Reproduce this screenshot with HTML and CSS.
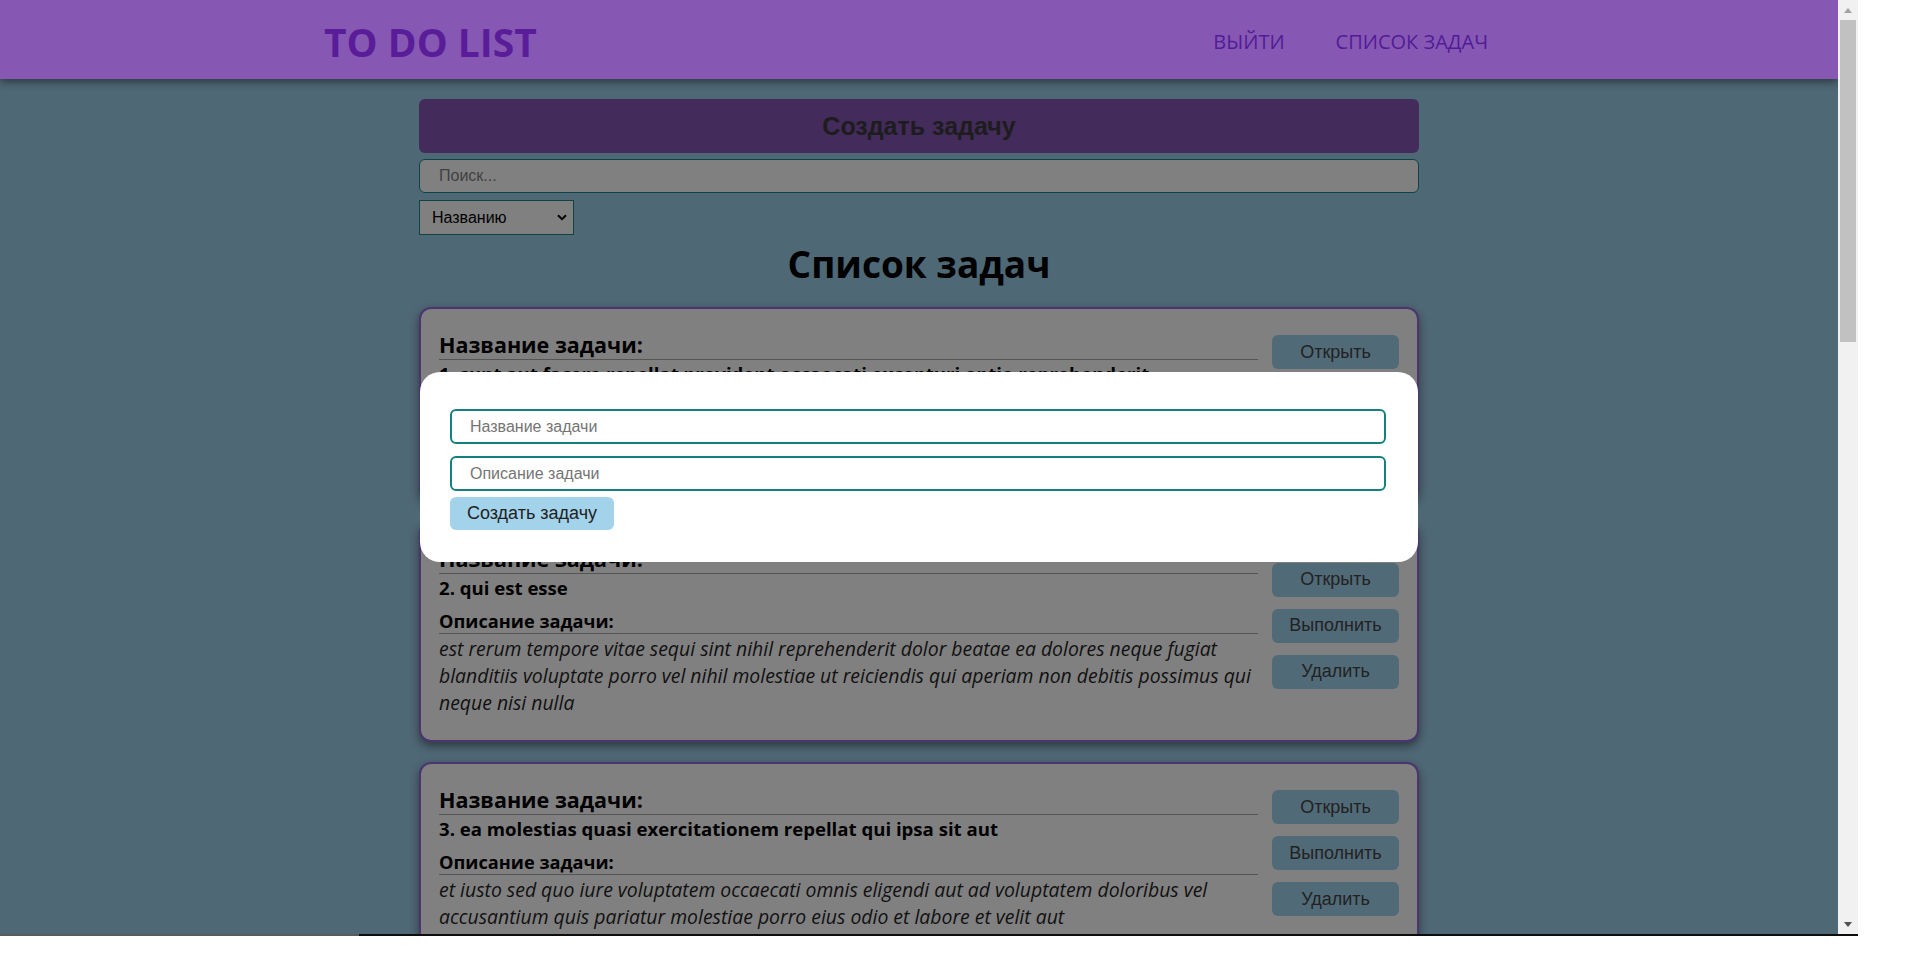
FILE: index.html
```html
<!DOCTYPE html>
<html lang="ru">
<head>
<meta charset="utf-8">
<title>TO DO LIST</title>
<link rel="stylesheet" href="styles.css">
</head>
<body>
<div class="screen">
  <div class="page">
    <header class="topbar">
      <div class="topbar-inner">
        <div class="logo">TO DO LIST</div>
        <nav class="nav">
          <a href="#" class="nav-link">ВЫЙТИ</a>
          <a href="#" class="nav-link">СПИСОК ЗАДАЧ</a>
        </nav>
      </div>
    </header>

    <main class="main">
      <button class="create-btn" type="button">Создать задачу</button>
      <input class="search" type="text" placeholder="Поиск...">
      <div class="sort">
        <select class="sort-select">
          <option>Названию</option>
          <option>Описанию</option>
        </select>
        <svg class="sort-chevron" width="10" height="7" viewBox="0 0 10 7"><path d="M1 1.2 L5 5.2 L9 1.2" fill="none" stroke="#000" stroke-width="2"/></svg>
      </div>
      <h2 class="list-title">Список задач</h2>

      <div class="cards">
        <article class="card">
          <div class="card-body">
            <h3 class="card-label">Название задачи:</h3>
            <p class="card-title">1. sunt aut facere repellat provident occaecati excepturi optio reprehenderit</p>
            <h4 class="card-label card-label-desc">Описание задачи:</h4>
            <p class="card-text">quia et suscipit suscipit recusandae consequuntur expedita et cum reprehenderit molestiae ut ut quas totam nostrum rerum est autem sunt rem eveniet architecto</p>
          </div>
          <div class="card-actions">
            <button class="card-btn" type="button">Открыть</button>
            <button class="card-btn" type="button">Выполнить</button>
            <button class="card-btn" type="button">Удалить</button>
          </div>
        </article>

        <article class="card">
          <div class="card-body">
            <h3 class="card-label">Название задачи:</h3>
            <p class="card-title">2. qui est esse</p>
            <h4 class="card-label card-label-desc">Описание задачи:</h4>
            <p class="card-text">est rerum tempore vitae sequi sint nihil reprehenderit dolor beatae ea dolores neque fugiat blanditiis voluptate porro vel nihil molestiae ut reiciendis qui aperiam non debitis possimus qui neque nisi nulla</p>
          </div>
          <div class="card-actions">
            <button class="card-btn" type="button">Открыть</button>
            <button class="card-btn" type="button">Выполнить</button>
            <button class="card-btn" type="button">Удалить</button>
          </div>
        </article>

        <article class="card">
          <div class="card-body">
            <h3 class="card-label">Название задачи:</h3>
            <p class="card-title">3. ea molestias quasi exercitationem repellat qui ipsa sit aut</p>
            <h4 class="card-label card-label-desc">Описание задачи:</h4>
            <p class="card-text">et iusto sed quo iure voluptatem occaecati omnis eligendi aut ad voluptatem doloribus vel accusantium quis pariatur molestiae porro eius odio et labore et velit aut</p>
          </div>
          <div class="card-actions">
            <button class="card-btn" type="button">Открыть</button>
            <button class="card-btn" type="button">Выполнить</button>
            <button class="card-btn" type="button">Удалить</button>
          </div>
        </article>
      </div>
    </main>

    <div class="overlay">
      <form class="modal">
        <input class="modal-input" type="text" placeholder="Название задачи">
        <input class="modal-input modal-input-second" type="text" placeholder="Описание задачи">
        <button class="modal-btn" type="button">Создать задачу</button>
      </form>
    </div>
  </div>

  <div class="scrollbar">
    <div class="sb-btn sb-up"><svg width="8" height="5" viewBox="0 0 8 5"><path d="M0 5 L4 0 L8 5 Z" fill="#a3a3a3"/></svg></div>
    <div class="sb-thumb"></div>
    <div class="sb-track"></div>
    <div class="sb-btn sb-down"><svg width="8" height="5" viewBox="0 0 8 5"><path d="M0 0 L8 0 L4 5 Z" fill="#505050"/></svg></div>
  </div>
</div>
<div class="strip"></div>
</body>
</html>
```
FILE: styles.css
```css
* {
  box-sizing: border-box;
}

html, body {
  margin: 0;
  padding: 0;
  background: #ffffff;
}

.screen {
  display: flex;
  width: 1858px;
  height: 934px;
  overflow: hidden;
}

.page {
  flex: 0 0 1838px;
  position: relative;
  overflow: hidden;
  background: #4f6875;
}

/* header */
.topbar {
  position: relative;
  z-index: 2;
  height: 79px;
  background: #8658b3;
  box-shadow: 0 3px 8px rgba(0, 0, 0, 0.45);
}

.topbar-inner {
  width: 1200px;
  height: 100%;
  margin: 0 auto;
  padding-left: 5px;
  display: flex;
  align-items: center;
  justify-content: space-between;
}

.logo {
  font-family: "Open Sans", sans-serif;
  font-weight: 700;
  font-size: 39px;
  line-height: 1;
  color: #5a1d99;
  padding-top: 4px;
}

.nav {
  display: flex;
  padding-top: 3px;
  padding-right: 31px;
}

.nav-link {
  font-family: "Open Sans", sans-serif;
  font-size: 20px;
  color: #521c96;
  text-decoration: none;
}

.nav-link + .nav-link {
  margin-left: 51px;
}

/* main column */
.main {
  width: 1000px;
  margin: 20px auto 0;
  display: flex;
  flex-direction: column;
}

.create-btn {
  height: 54px;
  border: none;
  border-radius: 6px;
  background: #432b5c;
  font-family: "Liberation Sans", Arial, sans-serif;
  font-weight: 700;
  font-size: 25px;
  color: #1d1d1d;
}

.search {
  margin-top: 6px;
  height: 34px;
  border: 1px solid #0e4444;
  border-radius: 6px;
  background: #808080;
  padding: 0 19px;
  font-family: "Liberation Sans", Arial, sans-serif;
  font-size: 16px;
  color: #000;
  outline: none;
}

.search::placeholder {
  color: #404040;
}

.sort {
  position: relative;
  margin-top: 7px;
  width: 155px;
  height: 35px;
}

.sort-select {
  width: 100%;
  height: 100%;
  appearance: none;
  -webkit-appearance: none;
  background: #808080;
  border: 1px solid #0e4444;
  border-radius: 0;
  padding: 0 0 0 12px;
  font-family: "Liberation Sans", Arial, sans-serif;
  font-size: 16px;
  color: #000;
}

.sort-chevron {
  position: absolute;
  right: 7px;
  top: 14px;
  pointer-events: none;
}

.list-title {
  margin: 0 0 14px;
  line-height: 58px;
  text-align: center;
  font-family: "Open Sans", sans-serif;
  font-weight: 700;
  font-size: 37px;
  color: #000;
}

/* cards */
.cards {
  display: flex;
  flex-direction: column;
  gap: 20px;
}

.card {
  display: flex;
  align-items: center;
  gap: 14px;
  padding: 14px 18px 26px;
  border: 2px solid #4b3470;
  border-radius: 12px;
  background: #808080;
  box-shadow: 0 4px 10px rgba(0, 0, 0, 0.45);
}

.card-body {
  flex: 1;
  min-width: 0;
  font-family: "Open Sans", sans-serif;
  color: #000;
}

.card-label {
  margin: 8px 0 0;
  font-weight: 700;
  font-size: 21.5px;
  line-height: 28px;
  border-bottom: 1px solid #555555;
}

.card-label-desc {
  font-size: 18.2px;
  line-height: 24px;
}

.card-title {
  margin: 1px 0 0;
  font-weight: 700;
  font-size: 18.6px;
  line-height: 26px;
}

.card-text {
  margin: 1px 0 -2px;
  font-style: italic;
  font-size: 19.4px;
  line-height: 27px;
  color: #111;
}

.card-actions {
  flex: 0 0 127px;
  display: flex;
  flex-direction: column;
  gap: 12px;
}

.card-btn {
  height: 34px;
  border: none;
  border-radius: 6px;
  background: #516a78;
  font-family: "Liberation Sans", Arial, sans-serif;
  font-size: 18px;
  color: #222;
}

/* modal */
.overlay {
  position: absolute;
  inset: 0;
  z-index: 1;
  display: flex;
  align-items: center;
  justify-content: center;
}

.modal {
  width: 998px;
  margin: 0;
  padding: 37px 32px 32px 30px;
  background: #ffffff;
  border-radius: 20px;
  display: flex;
  flex-direction: column;
}

.modal-input {
  height: 35px;
  border: 2px solid #148080;
  border-radius: 6px;
  padding: 0 18px;
  font-family: "Liberation Sans", Arial, sans-serif;
  font-size: 16px;
  color: #000;
  background: #fff;
  outline: none;
}

.modal-input::placeholder {
  color: #757575;
}

.modal-input-second {
  margin-top: 12px;
}

.modal-btn {
  align-self: flex-start;
  margin-top: 6px;
  width: 164px;
  height: 33px;
  border: none;
  border-radius: 6px;
  background: #a3d3eb;
  font-family: "Liberation Sans", Arial, sans-serif;
  font-size: 18px;
  color: #222;
}

/* fake window scrollbar */
.scrollbar {
  flex: 0 0 20px;
  display: flex;
  flex-direction: column;
  background: #f1f1f1;
}

.sb-btn {
  height: 20px;
  display: flex;
  align-items: center;
  justify-content: center;
}

.sb-thumb {
  height: 322px;
  margin: 0 2px;
  background: #c1c1c1;
}

.sb-track {
  flex: 1;
}

.strip {
  width: 1858px;
  height: 2px;
  background: linear-gradient(to right, #5b5b5b 0, #5b5b5b 359px, #0d0d0d 359px);
}
```
